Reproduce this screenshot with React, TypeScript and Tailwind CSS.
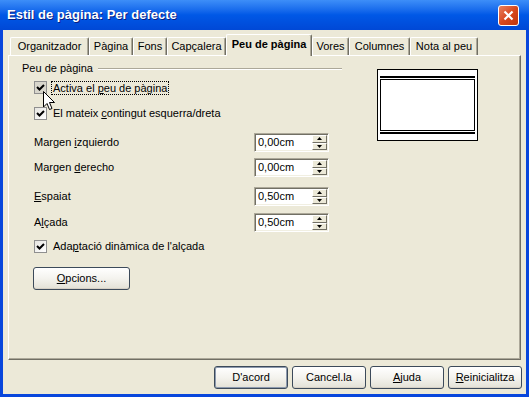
import React from "react";

const tabs = [
  { label: "Organitzador", w: "w-[79px]" },
  { label: "Pàgina", w: "w-[44px]" },
  { label: "Fons", w: "w-[34px]" },
  { label: "Capçalera", w: "w-[59px]" },
  { label: "Peu de pàgina", w: "w-[86px]", active: true },
  { label: "Vores", w: "w-[37px]" },
  { label: "Columnes", w: "w-[61px]" },
  { label: "Nota al peu", w: "w-[68px]" },
];

const Check = ({ dark }: { dark?: boolean }) => (
  <div
    className={`w-[13px] h-[13px] border border-[#8f8f8f] flex items-center justify-center shrink-0 ${
      dark ? "bg-[#d8d6cc]" : "bg-gradient-to-br from-[#e6e5e0] to-white"
    }`}
  >
    <svg width="9" height="9" viewBox="0 0 9 9">
      <path d="M1 4 L3.5 6.5 L8 2" fill="none" stroke="#000" strokeWidth="2" />
    </svg>
  </div>
);

const Spin = ({ value }: { value: string }) => (
  <div className="w-[75px] h-[19px] flex bg-white border border-t-[#aca899] border-l-[#aca899] border-r-white border-b-white shadow-[inset_1px_1px_0_#716f64,inset_-1px_-1px_0_#f1efe2]">
    <div className="flex-1 pl-[3px] flex items-center">{value}</div>
    <div className="w-[16px] flex flex-col py-[1px] pr-[1px]">
      <div className="flex-1 bg-[#ece9d8] border border-t-white border-l-white border-r-[#716f64] border-b-[#716f64] flex items-center justify-center">
        <svg width="5" height="3" viewBox="0 0 5 3">
          <path d="M2.5 0 L5 3 L0 3 Z" fill="#000" />
        </svg>
      </div>
      <div className="flex-1 bg-[#ece9d8] border border-t-white border-l-white border-r-[#716f64] border-b-[#716f64] flex items-center justify-center">
        <svg width="5" height="3" viewBox="0 0 5 3">
          <path d="M0 0 L5 0 L2.5 3 Z" fill="#000" />
        </svg>
      </div>
    </div>
  </div>
);

const Button = ({ children, primary, w = "w-[74px]" }: { children: React.ReactNode; primary?: boolean; w?: string }) => (
  <button
    className={`${w} h-[23px] rounded-[3px] border border-[#3c4a5a] bg-gradient-to-b from-white via-[#f4f3ee] to-[#e3e1d6] text-black text-[11px] ${
      primary ? "shadow-[inset_0_0_0_1px_#8d9aae]" : "shadow-[inset_0_-1px_0_#d6d0c5]"
    }`}
  >
    {children}
  </button>
);

export default function App() {
  return (
    <div className="w-[529px] h-[397px] flex flex-col font-['Liberation_Sans',Arial,sans-serif] text-[11px] text-black">
      {/* Title bar */}
      <div className="h-[30px] flex items-center justify-between pl-[7px] pr-[10px] bg-gradient-to-b from-[#3d8ef8] via-[#0058e6] to-[#0048d6]">
        <span className="text-white font-bold text-[13px] font-['Liberation_Sans',Arial,sans-serif] [text-shadow:1px_1px_0_#0a1e80]">
          Estil de pàgina: Per defecte
        </span>
        <div className="w-[21px] h-[21px] rounded-[3px] border border-white bg-gradient-to-br from-[#e8805c] via-[#d8481e] to-[#c0360e] flex items-center justify-center">
          <svg width="11" height="11" viewBox="0 0 11 11">
            <path d="M1.5 1.5 L9.5 9.5 M9.5 1.5 L1.5 9.5" stroke="#fff" strokeWidth="2.2" />
          </svg>
        </div>
      </div>

      {/* Body */}
      <div className="flex-1 flex flex-col bg-[#ece9d8] border-x-[3px] border-b-[3px] border-[#0846dc]">
        {/* Tabs */}
        <div className="flex items-end pl-[7px] pt-[4px] h-[25px]">
          {tabs.map((t) =>
            t.active ? (
              <div
                key={t.label}
                className={`${t.w} h-[22px] -mb-[1px] relative z-10 bg-[#ece9d8] border-l border-t border-white border-r border-r-[#716f64] shadow-[inset_-1px_0_0_#aca899] rounded-t-[2px] flex items-center justify-center font-bold pb-[2px]`}
              >
                {t.label}
              </div>
            ) : (
              <div
                key={t.label}
                className={`${t.w} h-[18px] bg-[#ece9d8] border-l border-t border-white border-r border-r-[#716f64] shadow-[inset_-1px_0_0_#aca899] rounded-t-[2px] flex items-center justify-center`}
              >
                {t.label}
              </div>
            )
          )}
        </div>

        {/* Panel */}
        <div className="relative mx-[5px] h-[305px] flex border-l border-t border-white border-r border-b border-r-[#716f64] border-b-[#716f64] shadow-[inset_-1px_-1px_0_#aca899]">
          <div className="w-[333px] pl-[13px] pt-[6px] flex flex-col">
            <div className="h-[13px] flex items-center">
              <span>Peu de pàgina</span>
              <div className="flex-1 ml-[5px] border-t border-t-[#aca899] border-b border-b-white" />
            </div>

            <div className="mt-[6px] pl-[12px] h-[13px] flex items-center">
              <Check dark />
              <span className="ml-[4px] border border-dotted border-black px-[1px] leading-[12px]">
                Activa el <span className="underline">p</span>eu de pàgina
              </span>
            </div>
            <div className="mt-[13px] pl-[12px] h-[13px] flex items-center">
              <Check />
              <span className="ml-[6px]">
                El mateix <span className="underline">c</span>ontingut esquerra/dreta
              </span>
            </div>

            <div className="mt-[13px] pl-[12px] flex items-center">
              <span className="w-[220px]">
                Margen <span className="underline">i</span>zquierdo
              </span>
              <Spin value="0,00cm" />
            </div>
            <div className="mt-[6px] pl-[12px] flex items-center">
              <span className="w-[220px]">
                Margen <span className="underline">d</span>erecho
              </span>
              <Spin value="0,00cm" />
            </div>
            <div className="mt-[10px] pl-[12px] flex items-center">
              <span className="w-[220px]">
                <span className="underline">E</span>spaiat
              </span>
              <Spin value="0,50cm" />
            </div>
            <div className="mt-[7px] pl-[12px] flex items-center">
              <span className="w-[220px]">
                A<span className="underline">l</span>çada
              </span>
              <Spin value="0,50cm" />
            </div>

            <div className="mt-[8px] pl-[12px] h-[13px] flex items-center">
              <Check />
              <span className="ml-[6px]">
                Ada<span className="underline">p</span>tació dinàmica de l'alçada
              </span>
            </div>

            <div className="mt-[14px] pl-[11px]">
              <Button w="w-[97px]">
                <span className="underline">O</span>pcions...
              </Button>
            </div>
          </div>

          {/* Page preview */}
          <div className="ml-[35px] mt-[13px] w-[101px] h-[72px] bg-white border border-black px-[2px] pt-[6px] flex flex-col">
            <div className="h-[2px] bg-black" />
            <div className="mt-[1px] h-[52px] border border-black" />
            <div className="mt-[1px] h-[2px] bg-black" />
          </div>

          {/* Mouse cursor */}
          <svg className="absolute left-[34px] top-[35px]" width="13" height="20" viewBox="0 0 13 20">
            <path d="M0.5 0.5 L0.5 16 L4 12.5 L6.5 18.5 L9 17.5 L6.5 11.5 L11.5 11.5 Z" fill="#fff" stroke="#000" strokeWidth="1" />
          </svg>
        </div>

        {/* Buttons */}
        <div className="mt-[6px] pr-[4px] flex justify-end gap-[4px]">
          <Button primary>D'acord</Button>
          <Button>Cancel.la</Button>
          <Button>
            <span className="underline">A</span>juda
          </Button>
          <Button>
            <span className="underline">R</span>einicialitza
          </Button>
        </div>
      </div>
    </div>
  );
}
